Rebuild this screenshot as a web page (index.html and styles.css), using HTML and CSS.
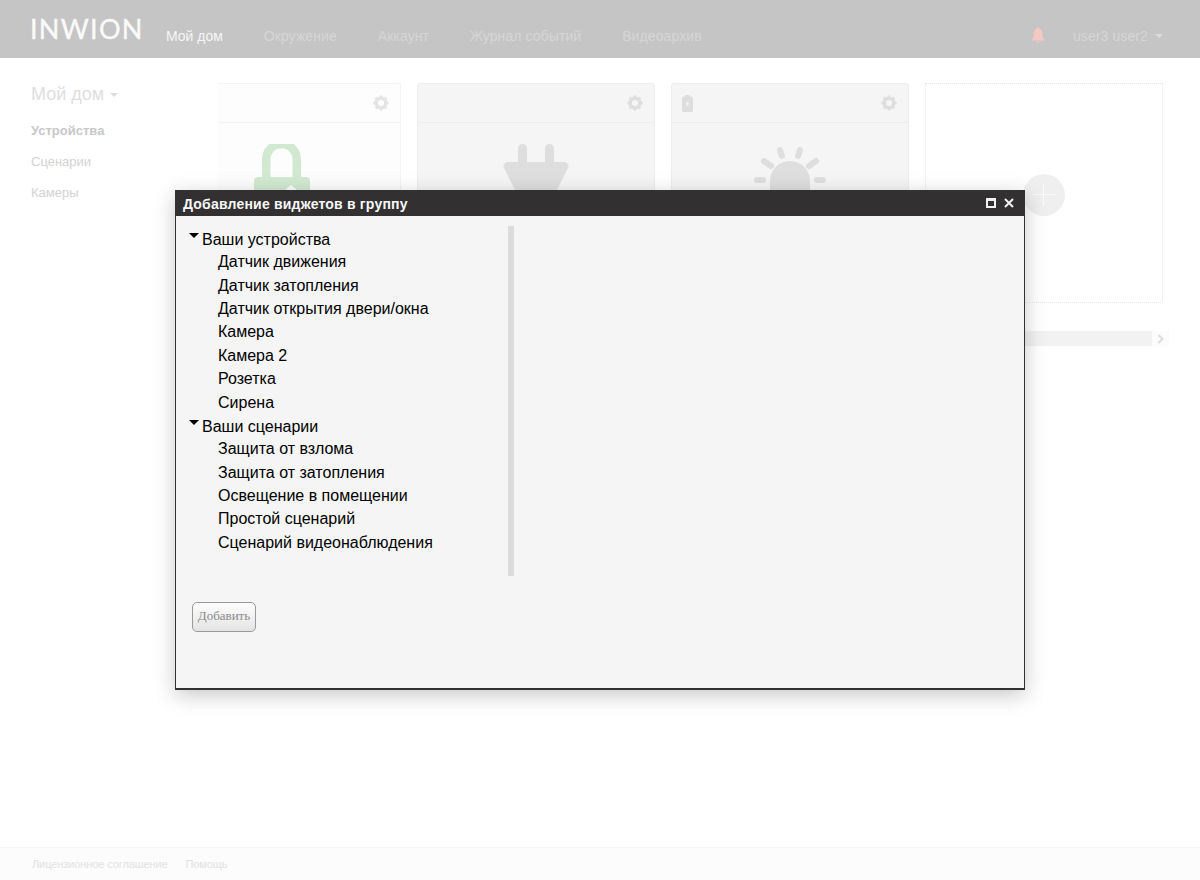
FILE: index.html
```html
<!DOCTYPE html>
<html lang="ru">
<head>
<meta charset="utf-8">
<title>INWION</title>
<link rel="stylesheet" href="styles.css">
</head>
<body>
<svg class="defs" width="0" height="0"><defs>
<g id="gear"><circle cx="8" cy="8" r="4.800" fill="none" stroke="currentColor" stroke-width="3.400"/>
<path d="M8 0.400V15.600M0.400 8H15.600M2.600 2.600L13.400 13.400M13.400 2.600L2.600 13.400" stroke="currentColor" stroke-width="2.800" stroke-dasharray="3 9.200" fill="none"/></g>
</defs></svg>
<header class="topbar">
  <div class="logo">INWION</div>
  <nav class="nav">
    <a class="nav-item active">Мой дом</a>
    <a class="nav-item">Окружение</a>
    <a class="nav-item">Аккаунт</a>
    <a class="nav-item">Журнал событий</a>
    <a class="nav-item">Видеоархив</a>
  </nav>
  <div class="user">
    <svg class="bell" viewBox="0 0 16 16" width="16" height="16"><path d="M8 0.500c.8 0 1.300.5 1.300 1.200 2 .5 3 2.200 3 4.500 0 3.400.9 5.200 2.400 6.600v.7H1.300v-.7C2.800 11.400 3.700 9.600 3.700 6.200c0-2.300 1-4 3-4.500C6.700 1 7.200.5 8 .5zM6.400 14.400h3.200c0 .8-.7 1.300-1.600 1.300s-1.600-.5-1.600-1.300z"/></svg>
    <span class="user-name">user3 user2</span>
    <span class="caret user-caret"></span>
  </div>
</header>
<div class="main">
  <aside class="side">
    <div class="side-title">Мой дом <span class="caret side-caret"></span></div>
    <a class="side-link current">Устройства</a>
    <a class="side-link">Сценарии</a>
    <a class="side-link">Камеры</a>
  </aside>
  <div class="content">
    <div class="cards">
      <section class="card card-first">
        <div class="card-head"><svg class="gear" viewBox="0 0 16 16" width="16" height="16"><use href="#gear"/></svg></div>
        <div class="card-body">
          <svg class="pic" viewBox="0 0 60 70" width="60" height="70"><path d="M14.250 36V15.250a15.250 15.250 0 0 1 30.500 0V36" fill="none" stroke="#d1e9d1" stroke-width="8.500"/><rect x="2" y="33" width="56" height="37" rx="4" fill="#d1e9d1"/><path d="M39 41L33 46H45z" fill="#fdfdfd"/></svg>
        </div>
      </section>
      <section class="card">
        <div class="card-head"><svg class="gear" viewBox="0 0 16 16" width="16" height="16"><use href="#gear"/></svg></div>
        <div class="card-body">
          <svg class="pic" viewBox="0 0 66 70" width="66" height="70"><path d="M15 4.500a4.500 4.500 0 0 1 9 0V18H42V4.500a4.500 4.500 0 0 1 9 0V18H61c3.500 0 5.500 3 4 6L47 60H19L1 24c-1.500-3 .5-6 4-6H15z" fill="#dedede"/></svg>
        </div>
      </section>
      <section class="card">
        <div class="card-head split">
          <svg class="battery" viewBox="0 0 11 17" width="11" height="17"><path d="M3 0h5v1.500h1.500A1.500 1.500 0 0 1 11 3v12.500A1.500 1.500 0 0 1 9.500 17h-8A1.500 1.500 0 0 1 0 15.500V3a1.500 1.500 0 0 1 1.500-1.500H3z" fill="#dedede"/><path d="M6.500 5L3.500 9.500H5.200L4.500 12.500L7.500 8H5.700z" fill="#f5f5f5"/></svg>
          <svg class="gear" viewBox="0 0 16 16" width="16" height="16"><use href="#gear"/></svg>
        </div>
        <div class="card-body">
          <svg class="pic" viewBox="0 0 76 70" width="76" height="70"><path d="M18 37a20 20 0 0 1 40 0V70H18z" fill="#dedede"/><path d="M5 36H11M12 17L19 22M28 6L30 12M48 6L46 12M64 17L57 22M65 36H71" stroke="#dedede" stroke-width="6" stroke-linecap="round" fill="none"/></svg>
        </div>
      </section>
      <section class="card card-add">
        <div class="add-circle"><span class="plus-h"></span><span class="plus-v"></span></div>
      </section>
    </div>
    <div class="scroller">
      <div class="track"></div>
      <div class="arrow"><svg viewBox="0 0 8 10" width="8" height="10"><path d="M1.500 1L5.500 5L1.500 9" fill="none" stroke="#dedede" stroke-width="2.200"/></svg></div>
    </div>
  </div>
</div>
<footer class="footer">
  <a class="foot-link">Лицензионное соглашение</a>
  <a class="foot-link">Помощь</a>
</footer>

<div class="dialog">
  <div class="dialog-title">
    <span class="dialog-text">Добавление виджетов в группу</span>
    <span class="win-max"></span>
    <svg class="win-close" viewBox="0 0 10 10" width="10" height="10"><path d="M1 1L9 9M9 1L1 9" stroke="#f2f2f2" stroke-width="2" fill="none"/></svg>
  </div>
  <div class="dialog-body">
    <div class="panes">
      <ul class="tree">
        <li class="group"><span class="tri"></span>Ваши устройства</li>
        <li class="leaf">Датчик движения</li>
        <li class="leaf">Датчик затопления</li>
        <li class="leaf">Датчик открытия двери/окна</li>
        <li class="leaf">Камера</li>
        <li class="leaf">Камера 2</li>
        <li class="leaf">Розетка</li>
        <li class="leaf">Сирена</li>
        <li class="group"><span class="tri"></span>Ваши сценарии</li>
        <li class="leaf">Защита от взлома</li>
        <li class="leaf">Защита от затопления</li>
        <li class="leaf">Освещение в помещении</li>
        <li class="leaf">Простой сценарий</li>
        <li class="leaf">Сценарий видеонаблюдения</li>
      </ul>
      <div class="splitter"></div>
    </div>
    <button class="add-btn" type="button">Добавить</button>
  </div>
</div>
</body>
</html>
```
FILE: styles.css
```css
* { box-sizing: border-box; }
html, body { margin: 0; padding: 0; }
body {
  width: 1200px;
  height: 880px;
  overflow: hidden;
  display: flex;
  flex-direction: column;
  background: #fff;
  font-family: "Liberation Sans", Arial, sans-serif;
  position: relative;
}
.defs { position: absolute; }

.topbar {
  height: 58px;
  flex: none;
  background: #c5c5c5;
  display: flex;
  align-items: flex-start;
  padding: 0 37px 0 30px;
}
.logo {
  font-family: Lato, "Open Sans", sans-serif;
  font-size: 27px;
  line-height: 58px;
  letter-spacing: 1.300px;
  -webkit-text-stroke: .35px #fafafa;
  color: #fafafa;
  width: 136px;
  flex: none;
}
.nav { display: flex; gap: 40.800px; padding-top: 28px; flex: 1; }
.nav-item { font-size: 14px; line-height: 16px; letter-spacing: .1px; color: #d6d6d6; }
.nav-item.active { color: #f6f6f6; letter-spacing: 0; }
.user { display: flex; align-items: flex-start; padding-top: 27px; }
.bell { fill: #f5c8c2; margin-right: 27px; }
.user-name { font-size: 14px; line-height: 16px; letter-spacing: .1px; color: #d6d6d6; margin-right: 7px; margin-top: 1px; }
.caret {
  display: inline-block;
  width: 0;
  height: 0;
  border-left: 4px solid transparent;
  border-right: 4px solid transparent;
  border-top: 4px solid #dcdcdc;
}
.user-caret { margin-top: 7px; }

.main { display: flex; flex: 1; padding-top: 25px; }
.side { width: 218px; flex: none; padding-left: 31px; display: flex; flex-direction: column; }
.side-title { font-size: 18px; line-height: 22px; color: #dedede; margin-bottom: 18px; }
.side-caret { vertical-align: middle; margin-left: 1px; }
.side-link { font-size: 13px; line-height: 15px; color: #d2d2d2; margin-bottom: 16px; }
.side-link.current { font-weight: bold; color: #c8c8c8; }

.content { flex: none; width: 951px; }
.cards { display: flex; gap: 16px; height: 220px; }
.card {
  width: 238px;
  height: 220px;
  background: #f5f5f5;
  border: 1px solid #ededed;
  border-radius: 3px;
  display: flex;
  flex-direction: column;
}
.card-first { width: 183px; overflow: hidden; background: #fdfdfd; border-color: #f3f3f3; border-left: 0; border-radius: 0 3px 3px 0; }
.card-head {
  height: 39px;
  flex: none;
  border-bottom: 1px solid #ededed;
  display: flex;
  justify-content: flex-end;
  align-items: center;
  padding: 0 11px 0 10px;
}
.card-first .card-head { border-color: #f3f3f3; }
.card-head.split { justify-content: space-between; }
.gear { color: #dedede; }
.card-first .gear { color: #e4e4e4; }
.card-body { flex: 1; display: flex; justify-content: center; padding-top: 21px; }
.card-first .card-body { margin-left: -54px; }
.card-add {
  background: #fff;
  border: 1px dotted #e6e6e6;
  border-radius: 0;
  align-items: center;
  justify-content: center;
}
.add-circle {
  width: 42px;
  height: 42px;
  border-radius: 50%;
  background: #efefef;
  position: relative;
  margin-top: 3px;
}
.plus-h, .plus-v { position: absolute; background: #fafafa; }
.plus-h { left: 10px; top: 20px; width: 22px; height: 1px; }
.plus-v { left: 20px; top: 10px; width: 1px; height: 22px; }

.scroller { display: flex; justify-content: flex-end; margin-top: 28px; height: 15px; width: 951px; }
.track { width: 934px; background: #f2f2f2; }
.arrow { width: 17px; background: #fcfcfc; display: flex; align-items: center; justify-content: center; }

.footer {
  height: 33px;
  flex: none;
  background: #fcfcfc;
  border-top: 1px solid #f6f6f6;
  display: flex;
  gap: 18px;
  padding-left: 32px;
  align-items: center;
}
.foot-link { font-size: 11px; letter-spacing: -.1px; color: #e2e2e2; }

.dialog {
  position: absolute;
  left: 175px;
  top: 190px;
  width: 850px;
  height: 500px;
  background: #f5f5f5;
  border: 1px solid #323031;
  border-top: 0;
  border-bottom-width: 2px;
  box-shadow: 0 5px 20px rgba(0, 0, 0, .22);
  display: flex;
  flex-direction: column;
}
.dialog-title {
  height: 26px;
  flex: none;
  margin: 0 -1px;
  background: #323031;
  display: flex;
  align-items: center;
  padding: 0 11px 0 8px;
}
.dialog-text {
  flex: 1;
  font-size: 14px;
  line-height: 16px;
  padding-top: 2px;
  font-weight: bold;
  letter-spacing: .2px;
  color: #f8f8f8;
}
.win-max {
  width: 10px;
  height: 10px;
  border: 2px solid #f2f2f2;
  border-top-width: 3px;
  margin-right: 8px;
}
.dialog-body { flex: 1; display: flex; flex-direction: column; padding: 10px 0 0 16px; }
.panes { display: flex; height: 350px; }
.tree {
  list-style: none;
  margin: 0;
  padding: .980px 0 0;
  width: 316px;
  flex: none;
  font-size: 16px;
  line-height: 23.370px;
  color: #000;
}
.group { position: relative; padding: 2px 0 0 10px; line-height: 21.370px; }
.tri {
  position: absolute;
  left: -3px;
  top: 6px;
  width: 0;
  height: 0;
  border-left: 5px solid transparent;
  border-right: 5px solid transparent;
  border-top: 5px solid #000;
}
.leaf { padding-left: 26px; }
.splitter { width: 6px; background: #dcdcdc; }
.add-btn {
  margin-top: 26px;
  width: 64px;
  height: 30px;
  padding: 0 0 2px;
  border: 1px solid #999;
  border-radius: 5px;
  background: linear-gradient(#fdfdfd, #e4e4e4);
  font-family: "Liberation Serif", serif;
  font-size: 13px;
  color: #8c8c8c;
}
```
